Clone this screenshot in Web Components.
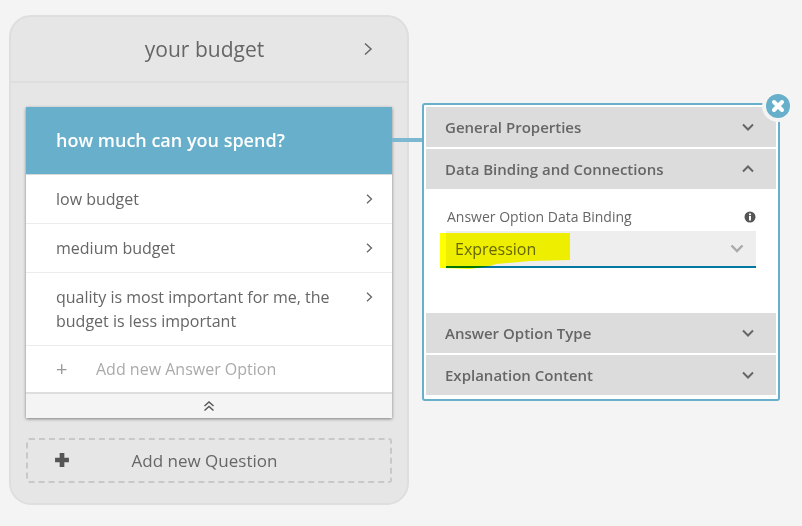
<!doctype html>
<html><head><meta charset="utf-8"><style>
html,body{margin:0;padding:0;height:100%}
body{background:#f4f4f4;font-family:"Open Sans",sans-serif;color:#666;overflow:hidden}
</style></head><body>
<template id="t-page"><style>
:host{display:flex;align-items:flex-start;padding:15px 0 0 9px;width:802px;height:526px;box-sizing:border-box;position:relative}
</style><slot></slot></template>

<template id="t-section"><style>
:host{display:block;width:400px;height:490px;box-sizing:border-box;background:#e6e6e6;border:2px solid #dedede;border-radius:22px;flex:none}
header{height:64px;border-bottom:2px solid #dedede;display:flex;align-items:center;justify-content:center;position:relative;font-size:21px;color:#666;box-sizing:content-box}
header span{margin-right:9px}
header svg{position:absolute;right:34px;top:25px}
.body{padding:24px 15px 0 15px}
</style><header><span><slot name="title"></slot></span><svg width="10" height="14" viewBox="0 0 10 14" fill="none" stroke="#666" stroke-width="1.5"><path d="M2 1.500 8 7 2 12.500"/></svg></header><div class="body"><slot></slot></div></template>

<template id="t-card"><style>
:host{display:block;background:#fff;box-shadow:0 1px 3px rgba(0,0,0,.45);height:311px;display:flex;flex-direction:column}
.q{height:67px;box-sizing:content-box;background:#67afca;color:#fff;font-weight:600;font-size:18px;display:flex;align-items:center;padding-left:30px;border-bottom:1px solid #d9d9d9;flex:none}
.q span{display:block;margin-top:-2px}
.rows{flex:1;display:flex;flex-direction:column}
.foot{height:26px;background:#f4f4f4;border-top:2px solid #dedede;box-sizing:border-box;display:flex;align-items:center;justify-content:center;flex:none}
</style><div class="q"><span><slot name="q"></slot></span></div><div class="rows"><slot></slot></div><div class="foot"><svg width="12" height="12" viewBox="0 0 12 12" fill="none" stroke="#555" stroke-width="1.4"><path d="M1.500 6 6 2 10.500 6M1.500 10.500 6 6.500 10.500 10.500"/></svg></div></template>

<template id="t-answer"><style>
:host{display:flex;box-sizing:border-box;padding:12px 50px 0 30px;height:49px;border-bottom:1px solid #ececec;font-size:16px;line-height:24px;color:#666;position:relative}
:host([tall]){height:73px}
svg{position:absolute;right:19px;top:19px}
</style><slot></slot><svg width="7" height="10" viewBox="0 0 7 10" fill="none" stroke="#666" stroke-width="1.3"><path d="M1 .8 5.500 5 1 9.200"/></svg></template>

<template id="t-add-answer"><style>
:host{display:flex;align-items:center;height:46px;padding-left:30px;font-size:16px;color:#aaa;flex:none}
.p{width:40px;font-size:20px;line-height:20px;color:#999}
</style><span class="p">+</span><slot></slot></template>

<template id="t-add-question"><style>
:host{display:flex;align-items:center;box-sizing:border-box;height:45px;margin-top:20px;border:2px dashed #c8c8c8;border-radius:3px;font-size:17px;color:#666;position:relative;justify-content:center;padding-right:9px}
svg{position:absolute;left:26px;top:12px}
</style><svg width="16" height="16" viewBox="0 0 15 15" fill="#555"><path d="M5.300 1h4.400v4.300H14v4.400H9.700V14H5.300V9.700H1V5.300h4.300z"/></svg><slot></slot></template>

<template id="t-panel"><style>
:host{display:block;position:relative;margin:88px 0 0 13px;width:358px;height:298px;box-sizing:border-box;border:2px solid #67afca;border-radius:3px;padding:2px;background:#fff;flex:none}
.conn{position:absolute;left:-32px;top:33px;width:30px;height:4px;background:#7cb9d1}
.close{position:absolute;right:-12px;top:-11px;width:24px;height:24px;border-radius:50%;background:#67afca;box-shadow:0 0 0 4px #f4f4f4;display:flex;align-items:center;justify-content:center}
</style><div class="conn"></div><div class="close"><svg width="14" height="14" viewBox="0 0 14 14" stroke="#fff" stroke-width="4" stroke-linecap="round"><path d="M3 3 11 11M11 3 3 11"/></svg></div><slot></slot></template>

<template id="t-acc"><style>
:host{display:flex;align-items:center;justify-content:space-between;height:40px;background:#dcdcdc;padding:0 22px 0 19px;font-size:15px;font-weight:600;color:#666;margin-bottom:2px}
:host([last]){margin-bottom:0}
svg{display:block}
</style><slot></slot><svg width="12" height="8" viewBox="0 0 12 8" fill="none" stroke="#666" stroke-width="2"><path d="M1 1.500 6 6.500 11 1.500"/></svg></template>

<template id="t-acc-up"><style>
:host{display:flex;align-items:center;justify-content:space-between;height:40px;background:#dcdcdc;padding:0 22px 0 19px;font-size:15px;font-weight:600;color:#666}
</style><slot></slot><svg width="12" height="8" viewBox="0 0 12 8" fill="none" stroke="#666" stroke-width="2"><path d="M1 6.500 6 1.500 11 6.500"/></svg></template>

<template id="t-field"><style>
:host{display:block;height:124px;box-sizing:border-box;padding:18px 20px 0 20px;position:relative}
.lab{display:flex;justify-content:space-between;align-items:center;font-size:14px;line-height:20px;color:#666;padding-left:1px;height:20px}
.sel{margin-top:4px;height:37px;box-sizing:border-box;background:#eee;border-bottom:2px solid #00789f;display:flex;align-items:center;justify-content:space-between;padding:0 12px 0 9px;font-size:16px;color:#666}
.hl{position:absolute;left:14px;top:44px;mix-blend-mode:multiply}
</style><div class="lab"><span><slot name="label"></slot></span><svg width="12" height="12" viewBox="0 0 12 12"><circle cx="6" cy="6" r="5.500" fill="#555"/><rect x="5" y="5" width="2" height="4.500" fill="#fff"/><rect x="5" y="2.500" width="2" height="1.700" fill="#fff"/></svg></div>
<div class="sel"><slot></slot><svg width="14" height="9" viewBox="0 0 14 9" fill="none" stroke="#aaa" stroke-width="2.400"><path d="M1.500 1.500 7 7 12.500 1.500"/></svg></div>
<svg class="hl" width="130" height="37" viewBox="0 0 130 37"><path fill="#ffff00" d="M0 0H130V27L90 28 56 31 50 33 30 36 0 35z"/></svg></template>

<script>
function def(name,tpl){customElements.define(name,class extends HTMLElement{constructor(){super();this.attachShadow({mode:'open'}).appendChild(document.getElementById(tpl).content.cloneNode(true));}});}
def('x-page','t-page');def('x-section','t-section');def('x-card','t-card');def('x-answer','t-answer');def('x-add-answer','t-add-answer');def('x-add-question','t-add-question');def('x-panel','t-panel');def('x-acc','t-acc');def('x-acc-up','t-acc-up');def('x-field','t-field');
</script>

<x-page>
<x-section><span slot="title">your budget</span>
<x-card><span slot="q">how much can you spend?</span>
<x-answer>low budget</x-answer>
<x-answer>medium budget</x-answer>
<x-answer tall>quality is most important for me, the budget is less important</x-answer>
<x-add-answer>Add new Answer Option</x-add-answer>
</x-card>
<x-add-question>Add new Question</x-add-question>
</x-section>
<x-panel>
<x-acc>General Properties</x-acc>
<x-acc-up>Data Binding and Connections</x-acc-up>
<x-field><span slot="label">Answer Option Data Binding</span>Expression</x-field>
<x-acc>Answer Option Type</x-acc>
<x-acc last>Explanation Content</x-acc>
</x-panel>
</x-page>
</body></html>
